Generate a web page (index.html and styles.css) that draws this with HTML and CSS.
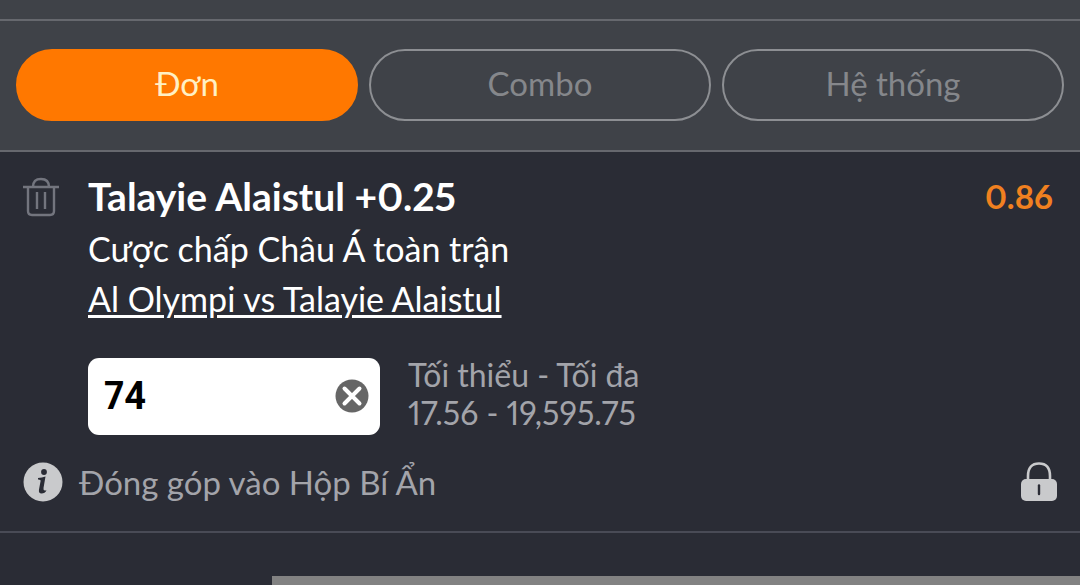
FILE: index.html
```html
<!DOCTYPE html>
<html lang="vi">
<head>
    <meta charset="UTF-8">
    <meta name="viewport" content="width=device-width, initial-scale=1">
    <title>Phiếu cược</title>
    <link rel="stylesheet" href="styles.css">
</head>
<body>
<div class="top-strip"></div>

<nav class="tabs">
    <button type="button" class="tab active">Đơn</button>
    <button type="button" class="tab">Combo</button>
    <button type="button" class="tab">Hệ thống</button>
</nav>

<main class="slip">
    <div class="bet">
        <button type="button" class="icon-btn" aria-label="Xóa">
            <svg width="36" height="40" viewBox="0 0 36 40" fill="none" stroke="#73757e" stroke-width="2.4">
                <path d="M0 10H36M10 10C10 4 13 2 18 2S26 4 26 10"/>
                <path d="M5 10V34Q5 38 9 38H27Q31 38 31 34V10"/>
                <path d="M14 15V32M22 15V32"/>
            </svg>
        </button>
        <div class="bet-info">
            <div class="bet-head">
                <h2>Talayie Alaistul +0.25</h2>
                <span class="odds">0.86</span>
            </div>
            <p>Cược chấp Châu Á toàn trận</p>
            <p><a href="#">Al Olympi vs Talayie Alaistul</a></p>
            <div class="stake-row">
                <div class="stake">
                    <input type="text" inputmode="decimal" value="74" aria-label="Tiền cược">
                    <button type="button" class="icon-btn" aria-label="Xóa tiền cược">
                        <svg width="34" height="34" viewBox="0 0 34 34">
                            <circle cx="17" cy="17" r="16.5" fill="#666"/>
                            <path d="M9.500 9.500L24.500 24.500M24.500 9.500L9.500 24.500" stroke="#fff" stroke-width="4" stroke-linecap="round"/>
                        </svg>
                    </button>
                </div>
                <div class="limits">
                    <div>Tối thiểu - Tối đa</div>
                    <div>17.56 - 19,595.75</div>
                </div>
            </div>
        </div>
    </div>

    <div class="mystery">
        <svg width="40" height="40" viewBox="0 0 40 40">
            <circle cx="20" cy="20" r="19.5" fill="#c9cacc"/>
            <circle cx="21" cy="10" r="2.9" fill="#2a2c35"/>
            <path d="M15 16Q19 16 22.5 14.6L20.5 26Q20 29.5 23.5 28.2Q22 31.4 18.5 31.4Q15.3 31.4 16 27.5L17.6 19Q18 17.3 15 17.4Z" fill="#2a2c35"/>
        </svg>
        <span>Đóng góp vào Hộp Bí Ẩn</span>
        <svg class="lock" width="36" height="40" viewBox="0 0 36 40">
            <path d="M7 19V14C7 5.500 11 1.500 18 1.500S29 5.500 29 14V19" fill="none" stroke="#c9cacc" stroke-width="2.600"/>
            <rect x="0" y="17" width="36" height="22" rx="5" fill="#c9cacc"/>
            <path d="M18 23.500V32" stroke="#2a2c35" stroke-width="2.400" stroke-linecap="round"/>
        </svg>
    </div>
</main>

<footer class="footer">
    <div class="footer-bar"></div>
</footer>
</body>
</html>
```

FILE: styles.css
```css
* {
    box-sizing: border-box;
}
body {
    margin: 0;
    background: #2a2c35;
    color: #fff;
    font-family: Lato, "Noto Sans", sans-serif;
    font-size: 33px;
    font-weight: 400;
    font-variant-numeric: proportional-nums;
}
h2, p {
    margin: 0;
}
button, input {
    font: inherit;
}
svg {
    display: block;
}
.top-strip {
    height: 19px;
    background: #3f4248;
}
.tabs {
    display: flex;
    gap: 11px;
    padding: 28px 16px 29px;
    background: #3f4248;
    border-top: 2px solid #66686e;
    border-bottom: 2px solid #66686e;
}
.tab {
    flex: 1;
    height: 72px;
    padding: 0 0 4px;
    border: 2px solid #8d8f93;
    border-radius: 36px;
    background: none;
    color: #85878b;
}
.tab.active {
    border-color: #ff7800;
    background: #ff7800;
    color: #fff0c4;
}
.icon-btn {
    padding: 0;
    border: 0;
    background: none;
}
.slip {
    padding: 18px 23px 29px;
    border-bottom: 2px solid #494b56;
}
.bet {
    display: flex;
    align-items: flex-start;
    gap: 29px;
}
.bet > .icon-btn {
    padding-top: 7px;
}
.bet-info {
    flex: 1;
}
.bet-info p {
    font-size: 34px;
    line-height: 50px;
}
.bet-info a {
    color: #fff;
    text-decoration-thickness: 3px;
    text-underline-offset: 3px;
}
.bet-head {
    display: flex;
    justify-content: space-between;
    padding: 0 4px 2px 0;
    line-height: 52px;
}
.bet-head h2 {
    font-size: 39px;
    font-weight: 700;
}
.odds {
    color: #f08020;
    font-weight: 700;
}
.stake-row {
    display: flex;
    align-items: center;
    gap: 28px;
    margin-top: 32px;
}
.stake {
    display: flex;
    align-items: center;
    width: 292px;
    height: 77px;
    padding: 0 11px 0 16px;
    border-radius: 11px;
    background: #fff;
}
.stake input {
    flex: 1;
    min-width: 0;
    padding: 0;
    border: 0;
    outline: 0;
    background: none;
    color: #000;
    font-family: Roboto, sans-serif;
    font-size: 38px;
    font-weight: 700;
}
.limits {
    padding-bottom: 4px;
    color: #a3a4aa;
    font-size: 32px;
    line-height: 38px;
}
.mystery {
    display: flex;
    align-items: center;
    gap: 16px;
    margin-top: 26px;
    color: #a3a4aa;
}
.mystery .lock {
    margin-left: auto;
}
.footer {
    padding: 43px 0 0 272px;
}
.footer-bar {
    height: 9px;
    background: #828282;
}
```
